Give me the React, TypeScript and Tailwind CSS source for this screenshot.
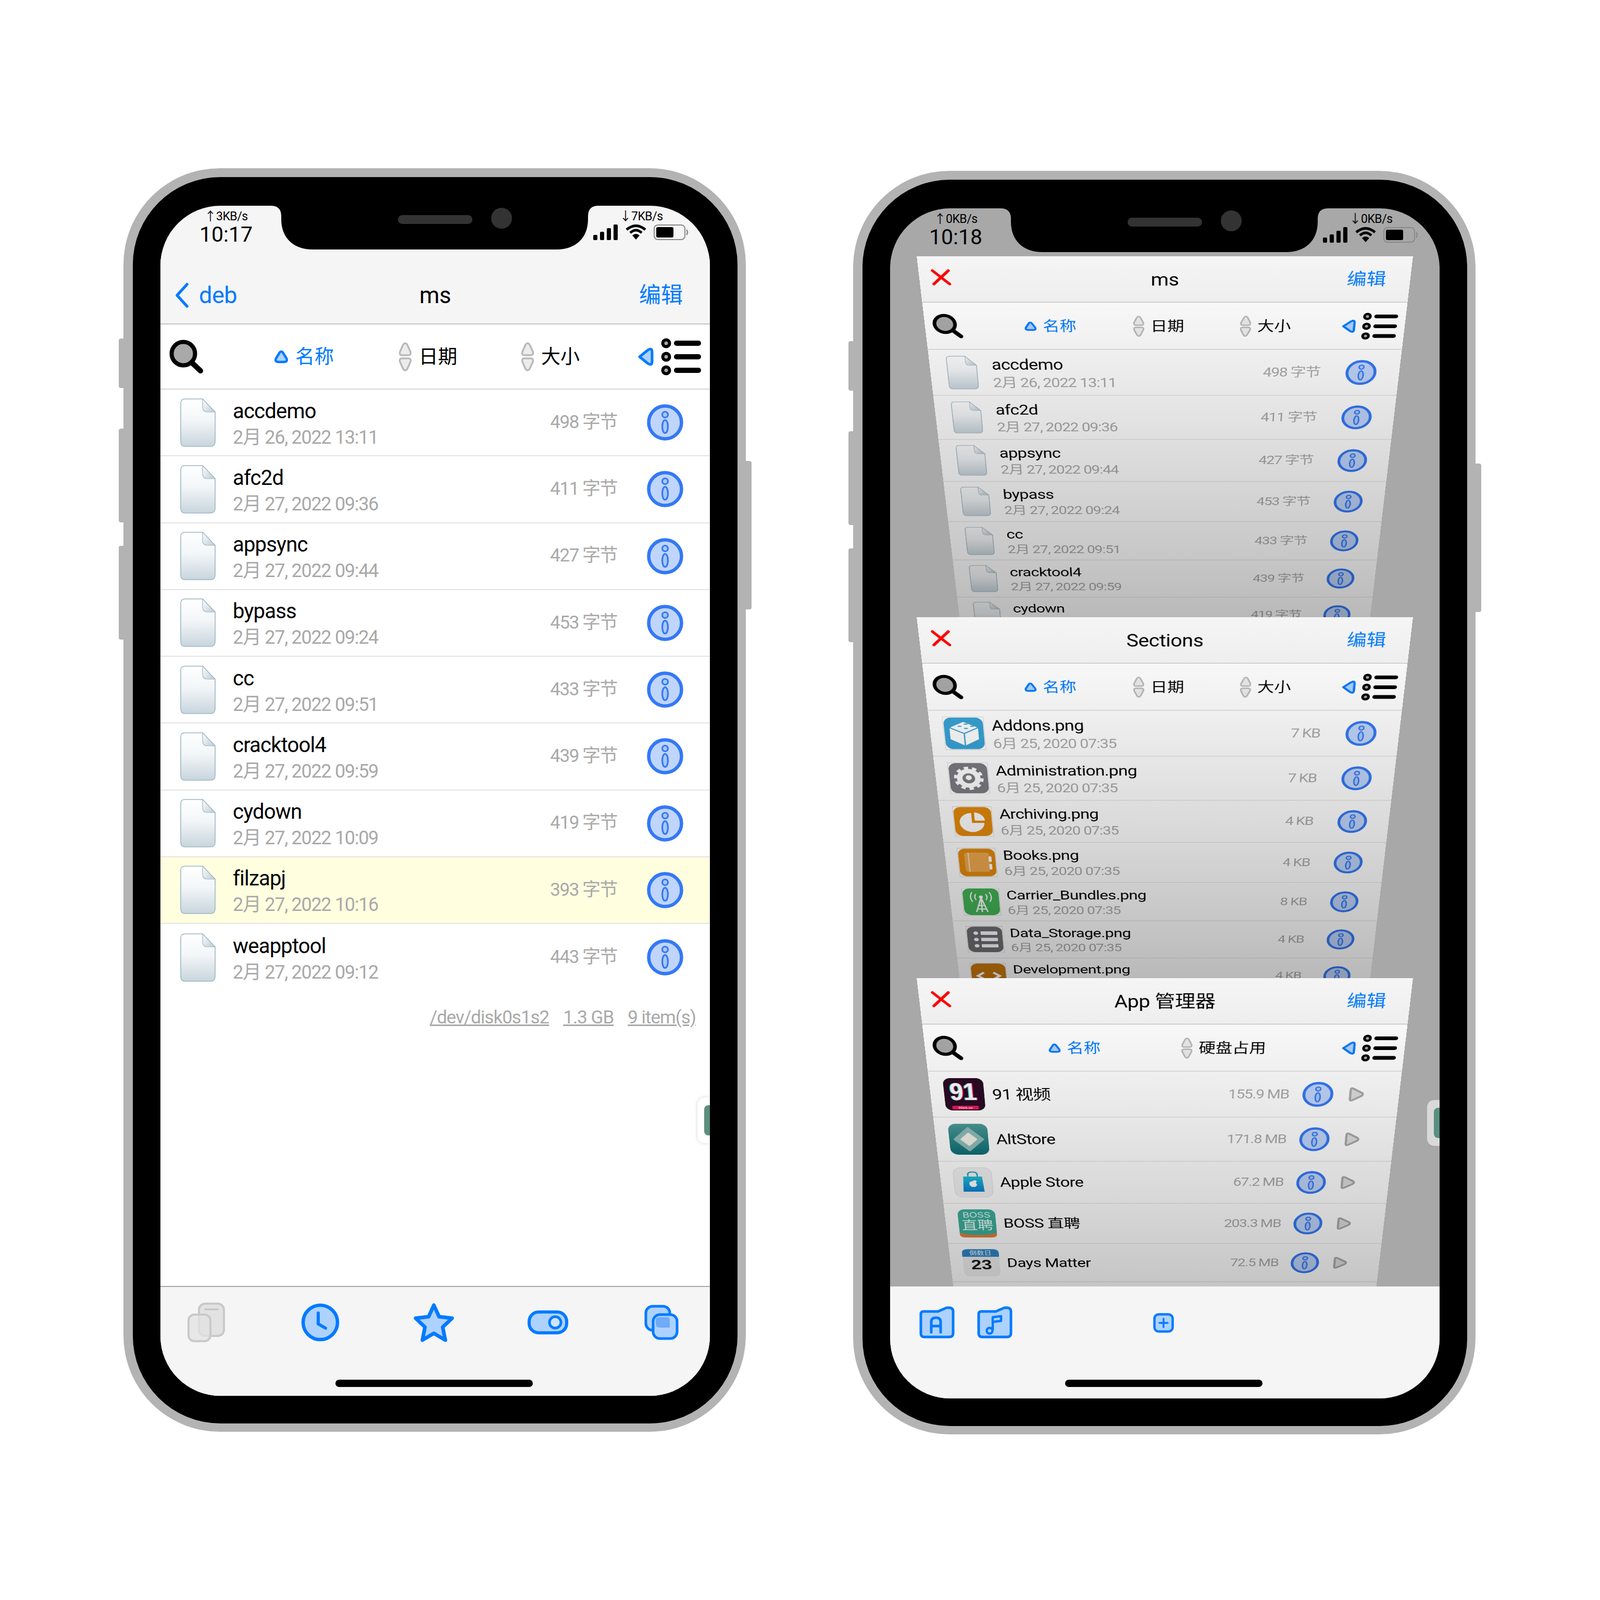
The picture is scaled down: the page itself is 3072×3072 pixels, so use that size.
import type { ReactNode } from "react";

const BLUE = "#007aff";
const SOFT = "#aed2ff";

// ---- small drawings ----

function Search() {
  return (
    <svg width="68" height="66" viewBox="0 0 68 66" className="shrink-0">
      <circle cx="28" cy="27" r="22.5" fill="#a9a9a9" stroke="#000" strokeWidth="8" />
      <path d="M44 44 L61 60" stroke="#000" strokeWidth="10" strokeLinecap="round" />
    </svg>
  );
}

function SortUp() {
  return (
    <svg width="28" height="28" viewBox="0 0 28 28" className="shrink-0">
      <path d="M14 4 Q16 4 17.5 6.5 L24 17 Q27 24 19 24 H9 Q1 24 4 17 L10.5 6.5 Q12 4 14 4 Z" fill={SOFT} stroke={BLUE} strokeWidth="4.5" strokeLinejoin="round" />
    </svg>
  );
}

function SortBoth() {
  return (
    <svg width="26" height="56" viewBox="0 0 26 56" className="shrink-0">
      <path d="M13 2 Q16 2 18 7 L23 18 Q25 25 19 25 H7 Q1 25 3 18 L8 7 Q10 2 13 2 Z" fill="#ececec" stroke="#b9b9b9" strokeWidth="3.5" />
      <path d="M13 54 Q16 54 18 49 L23 38 Q25 31 19 31 H7 Q1 31 3 38 L8 49 Q10 54 13 54 Z" fill="#ececec" stroke="#b9b9b9" strokeWidth="3.5" />
    </svg>
  );
}

function SortDir() {
  return (
    <svg width="30" height="36" viewBox="0 0 30 36" className="shrink-0">
      <path d="M3 18 L19 5 Q27 0 27 9 V27 Q27 36 19 31 Z" fill={SOFT} stroke={BLUE} strokeWidth="5" strokeLinejoin="round" />
    </svg>
  );
}

function ListIcon() {
  return (
    <svg width="78" height="72" viewBox="0 0 78 72" className="shrink-0">
      {[10, 36, 62].map((y) => (
        <g key={y}>
          <circle cx="10" cy={y} r="6.5" fill="#a9a9a9" stroke="#000" strokeWidth="6" />
          <rect x="25" y={y - 5} width="52" height="10" rx="5" fill="#000" />
        </g>
      ))}
    </svg>
  );
}

function FileIcon() {
  return (
    <svg width="68" height="93" viewBox="0 0 68 93" className="ml-[8px] shrink-0">
      <defs>
        <linearGradient id="fileFill" x1="0" y1="0" x2="0" y2="1">
          <stop offset="0" stopColor="#ffffff" />
          <stop offset="0.45" stopColor="#f3f6f8" />
          <stop offset="1" stopColor="#c8d5dd" />
        </linearGradient>
        <linearGradient id="fileFold" x1="0" y1="0" x2="1" y2="1">
          <stop offset="0" stopColor="#ffffff" />
          <stop offset="1" stopColor="#bccbd4" />
        </linearGradient>
      </defs>
      <path d="M9 1 H43 L67 26 V83 Q67 92 58 92 H9 Q1 92 1 83 V9 Q1 1 9 1 Z" fill="url(#fileFill)" stroke="#9fb6c3" strokeWidth="1.6" />
      <path d="M43 1 V17 Q43 26 52 26 H67 Z" fill="url(#fileFold)" stroke="#9fb6c3" strokeWidth="1.2" />
    </svg>
  );
}

function Info() {
  return (
    <svg width="70" height="70" viewBox="0 0 70 70" className="shrink-0">
      <circle cx="35" cy="35" r="31.5" fill="#bfd5fb" stroke="#3478f6" strokeWidth="6.5" />
      <circle cx="35" cy="20" r="5.5" fill="#a9c7f9" stroke="#3478f6" strokeWidth="3.2" />
      <ellipse cx="35" cy="43" rx="5.5" ry="12.5" fill="#a9c7f9" stroke="#3478f6" strokeWidth="3.2" />
    </svg>
  );
}

function Play() {
  return (
    <svg width="36" height="42" viewBox="0 0 36 42" className="shrink-0">
      <path d="M5 8 Q5 2 11 5 L31 17 Q35 21 31 25 L11 37 Q5 40 5 34 Z" fill="#dedede" stroke="#a8a8a8" strokeWidth="5" strokeLinejoin="round" />
    </svg>
  );
}

function CloseX() {
  return (
    <svg width="42" height="42" viewBox="0 0 42 42" className="shrink-0">
      <path d="M4 4 L38 38 M38 4 L4 38" stroke="#ff0000" strokeWidth="6.5" strokeLinecap="round" />
    </svg>
  );
}

function Chevron() {
  return (
    <svg width="30" height="50" viewBox="0 0 30 50" className="shrink-0">
      <path d="M25 4 L6 25 L25 46" fill="none" stroke={BLUE} strokeWidth="5.5" strokeLinecap="round" strokeLinejoin="round" />
    </svg>
  );
}

function Notch() {
  return (
    <svg width="629" height="84" viewBox="0 0 629 84" className="absolute left-[212px] top-0">
      <path d="M0 0 H629 Q609 0 609 20 V26 C609 62 585 84 549 84 H80 C44 84 20 62 20 26 V20 Q20 0 0 0 Z" fill="#000" />
      <rect x="244" y="18" width="143" height="17" rx="8.5" fill="#333" />
      <circle cx="443" cy="24" r="20" fill="#333" />
    </svg>
  );
}

function Signal() {
  return (
    <svg width="48" height="30" viewBox="0 0 48 30" className="shrink-0">
      <rect x="0" y="20" width="8" height="10" rx="2" fill="#000" />
      <rect x="13" y="14" width="8" height="16" rx="2" fill="#000" />
      <rect x="26" y="7" width="8" height="23" rx="2" fill="#000" />
      <rect x="39" y="0" width="8" height="30" rx="2" fill="#000" />
    </svg>
  );
}

function Wifi() {
  return (
    <svg width="40" height="30" viewBox="0 0 40 30" className="shrink-0">
      <path d="M2 10 Q20 -5 38 10" fill="none" stroke="#000" strokeWidth="5" />
      <path d="M9 16 Q20 6 31 16" fill="none" stroke="#000" strokeWidth="5" />
      <path d="M20 29 L13 21 Q20 15 27 21 Z" fill="#000" />
    </svg>
  );
}

function Battery() {
  return (
    <svg width="68" height="30" viewBox="0 0 68 30" className="shrink-0">
      <rect x="1" y="1" width="59" height="28" rx="7" fill="none" stroke="#8a8a8a" strokeWidth="2" />
      <rect x="5" y="5" width="33" height="20" rx="3" fill="#000" />
      <path d="M63 10 Q67 15 63 20" fill="none" stroke="#8a8a8a" strokeWidth="2.5" />
    </svg>
  );
}

// ---- tab bar icons ----

function TabCopies() {
  return (
    <svg width="72" height="76" viewBox="0 0 72 76">
      <rect x="22" y="2" width="48" height="62" rx="12" fill="#e2e2e2" stroke="#c9c9c9" strokeWidth="4" />
      <rect x="32" y="11" width="28" height="4" rx="2" fill="#c9c9c9" />
      <rect x="2" y="23" width="42" height="51" rx="11" fill="#e2e2e2" fillOpacity="0.75" stroke="#c9c9c9" strokeWidth="4" />
    </svg>
  );
}

function TabClock() {
  return (
    <svg width="74" height="74" viewBox="0 0 74 74">
      <circle cx="37" cy="37" r="33" fill={SOFT} stroke={BLUE} strokeWidth="6.5" />
      <path d="M33 19 V40 L47 48" fill="none" stroke={BLUE} strokeWidth="6" strokeLinecap="round" strokeLinejoin="round" />
    </svg>
  );
}

function TabStar() {
  return (
    <svg width="80" height="76" viewBox="0 0 80 76">
      <path d="M40 5 L50 27 L75 30 L57 47 L62 72 L40 59 L18 72 L23 47 L5 30 L30 27 Z" fill={SOFT} stroke={BLUE} strokeWidth="7" strokeLinejoin="round" />
    </svg>
  );
}

function TabToggle() {
  return (
    <svg width="78" height="46" viewBox="0 0 78 46">
      <rect x="3" y="3" width="72" height="40" rx="18" fill={SOFT} stroke={BLUE} strokeWidth="6" />
      <circle cx="53" cy="23" r="11" fill="#cfe3ff" stroke={BLUE} strokeWidth="5" />
    </svg>
  );
}

function TabStack() {
  return (
    <svg width="66" height="68" viewBox="0 0 66 68">
      <rect x="3" y="3" width="46" height="46" rx="13" fill={SOFT} stroke={BLUE} strokeWidth="5" />
      <rect x="17" y="19" width="46" height="46" rx="13" fill={SOFT} stroke={BLUE} strokeWidth="5" />
      <path d="M22 30 Q22 24 28 24 H44 Q49 24 49 30 V44 H30 Q22 44 22 36 Z" fill="#6fabf7" />
    </svg>
  );
}

function FolderA() {
  return (
    <svg width="68" height="62" viewBox="0 0 68 62">
      <path d="M8 10 H36 L52 3 Q65 1 65 10 V52 Q65 59 57 59 H10 Q3 59 3 52 V15 Q3 10 8 10 Z" fill={SOFT} stroke={BLUE} strokeWidth="5" strokeLinejoin="round" />
      <path d="M23 50 V30 Q23 22 32 22 Q41 22 41 30 V50 M23 38 H41" fill="none" stroke={BLUE} strokeWidth="5" strokeLinecap="round" />
    </svg>
  );
}

function FolderMusic() {
  return (
    <svg width="68" height="62" viewBox="0 0 68 62">
      <path d="M8 10 H36 L52 3 Q65 1 65 10 V52 Q65 59 57 59 H10 Q3 59 3 52 V15 Q3 10 8 10 Z" fill={SOFT} stroke={BLUE} strokeWidth="5" strokeLinejoin="round" />
      <circle cx="24" cy="47" r="5.5" fill="none" stroke={BLUE} strokeWidth="4.5" />
      <path d="M30 46 V21 L46 19 V28 L31 30" fill="none" stroke={BLUE} strokeWidth="4.5" strokeLinejoin="round" />
    </svg>
  );
}

function PlusBox() {
  return (
    <svg width="40" height="38" viewBox="0 0 40 38">
      <rect x="2.5" y="2.5" width="35" height="33" rx="8" fill={SOFT} stroke={BLUE} strokeWidth="4.5" />
      <path d="M20 11 V27 M12 19 H28" stroke={BLUE} strokeWidth="3.5" strokeLinecap="round" />
    </svg>
  );
}

// ---- app / section icons, 92 box ----

function Tile({ bg, children }: { bg: string; children?: ReactNode }) {
  return (
    <svg width="92" height="92" viewBox="0 0 92 92" className="shrink-0">
      <rect x="0.5" y="0.5" width="91" height="91" fill="none" stroke="#d4d4d4" />
      <rect x="2" y="2" width="88" height="88" rx="17" fill={bg} />
      {children}
    </svg>
  );
}

const AddonsIcon = (
  <Tile bg="#38a3d6">
    <path d="M46 14 L78 30 V62 L46 80 L14 62 V30 Z" fill="#fff" />
    <path d="M14 30 L46 46 L78 30 M46 46 V80" fill="none" stroke="#38a3d6" strokeWidth="3" />
    <path d="M34 26 h6 M48 20 h6 M48 32 h6 M62 26 h6" stroke="#38a3d6" strokeWidth="3" strokeLinecap="round" />
  </Tile>
);
const AdminIcon = (
  <Tile bg="#7b7b82">
    <circle cx="46" cy="46" r="21" fill="none" stroke="#fff" strokeWidth="13" />
    <circle cx="46" cy="46" r="30" fill="none" stroke="#fff" strokeWidth="8" strokeDasharray="10 8.85" />
    <circle cx="46" cy="44" r="7" fill="#fff" />
  </Tile>
);
const ArchiveIcon = (
  <Tile bg="#e58a0c">
    <path d="M43 20 V50 H72 A29 29 0 1 1 43 20 Z" fill="#fff" />
    <path d="M50 18 A26 26 0 0 1 74 43 H50 Z" fill="#fff" />
  </Tile>
);
const BooksIcon = (
  <Tile bg="#e58a0c">
    <rect x="16" y="14" width="60" height="62" rx="8" fill="#eea94f" />
    <path d="M26 14 V76" stroke="#f9dcae" strokeWidth="3" />
    <rect x="74" y="26" width="7" height="18" rx="3" fill="#fff" />
    <rect x="74" y="50" width="7" height="18" rx="3" fill="#fff" />
  </Tile>
);
const CarrierIcon = (
  <Tile bg="#43b556">
    <circle cx="46" cy="30" r="5" fill="#fff" />
    <path d="M34 20 Q28 30 34 40 M58 20 Q64 30 58 40 M25 14 Q16 30 25 46 M67 14 Q76 30 67 46" fill="none" stroke="#fff" strokeWidth="3" />
    <path d="M46 32 L32 80 M46 32 L60 80 M38 58 H54 M35 70 H57 M46 32 V80" fill="none" stroke="#fff" strokeWidth="3.5" />
  </Tile>
);
const StorageIcon = (
  <Tile bg="#6e6e73">
    {[24, 46, 68].map((y) => (
      <g key={y}>
        <circle cx="24" cy={y} r="6" fill="#fff" />
        <rect x="36" y={y - 6} width="42" height="12" rx="2" fill="#fff" />
      </g>
    ))}
  </Tile>
);
const DevIcon = (
  <Tile bg="#c8780c">
    <path d="M34 34 L18 46 L34 58 M58 34 L74 46 L58 58" fill="none" stroke="#fff" strokeWidth="7" />
  </Tile>
);

const NinetyOneIcon = (
  <svg width="92" height="92" viewBox="0 0 92 92" className="shrink-0">
    <rect x="1" y="1" width="90" height="90" rx="16" fill="#2b0a24" />
    <text transform="translate(12 62) scale(0.8 1)" fontFamily="Liberation Sans" fontWeight="700" fontSize="68" fill="#25e0e8">91</text>
    <text transform="translate(16 62) scale(0.8 1)" fontFamily="Liberation Sans" fontWeight="700" fontSize="68" fill="#f0275c">91</text>
    <text transform="translate(14 62) scale(0.8 1)" fontFamily="Liberation Sans" fontWeight="700" fontSize="68" fill="#ffffff">91</text>
    <rect x="16" y="78" width="60" height="10" rx="3" fill="#e9195c" />
    <text x="46" y="86" textAnchor="middle" fontFamily="Liberation Sans" fontWeight="700" fontSize="8" fill="#fff">91lvh.co</text>
  </svg>
);
const AltStoreIcon = (
  <svg width="92" height="92" viewBox="0 0 92 92" className="shrink-0">
    <defs>
      <linearGradient id="altBg" x1="0" y1="0" x2="0" y2="1">
        <stop offset="0" stopColor="#4d9a99" />
        <stop offset="1" stopColor="#0c6f76" />
      </linearGradient>
    </defs>
    <rect x="1" y="1" width="90" height="90" rx="18" fill="url(#altBg)" />
    <path d="M46 14 L78 46 L46 78 L14 46 Z" fill="#8fbdb9" stroke="#8fbdb9" strokeWidth="6" strokeLinejoin="round" />
    <path d="M46 30 L62 46 L46 62 L30 46 Z" fill="#f3f1e8" stroke="#f3f1e8" strokeWidth="6" strokeLinejoin="round" />
  </svg>
);
const AppleStoreIcon = (
  <svg width="92" height="92" viewBox="0 0 92 92" className="shrink-0">
    <defs>
      <linearGradient id="bagFill" x1="0" y1="0" x2="0" y2="1">
        <stop offset="0" stopColor="#1fc0d8" />
        <stop offset="1" stopColor="#0a7fd6" />
      </linearGradient>
    </defs>
    <rect x="1" y="1" width="90" height="90" rx="18" fill="#f2f2f2" stroke="#d6d6d6" />
    <path d="M35 28 V22 Q35 14 46 14 Q57 14 57 22 V28" fill="none" stroke="#1a9bbd" strokeWidth="3" />
    <path d="M24 28 H68 L71 74 H21 Z" fill="url(#bagFill)" />
    <path d="M46 40 Q52 38 55 42 Q50 46 55 53 Q50 62 46 59 Q42 62 37 53 Q35 42 46 42 Z" fill="#fff" />
  </svg>
);
const BossIcon = (
  <svg width="92" height="92" viewBox="0 0 92 92" className="shrink-0">
    <rect x="1" y="1" width="90" height="90" rx="17" fill="#3dae9c" />
    <path d="M1 76 Q46 90 91 76 V80 Q91 91 76 91 H16 Q1 91 1 80 Z" fill="#e3803b" />
    <text x="46" y="27" textAnchor="middle" fontFamily="Liberation Sans" fontSize="24" fill="#eafff8">BOSS</text>
    <text x="46" y="64" textAnchor="middle" fontFamily="Noto Sans CJK SC" fontSize="38" fill="#eafff8">直聘</text>
  </svg>
);
const DaysIcon = (
  <svg width="92" height="92" viewBox="0 0 92 92" className="shrink-0">
    <rect x="1" y="1" width="90" height="90" rx="14" fill="#f1f1f1" />
    <path d="M1 26 V15 Q1 1 15 1 H77 Q91 1 91 15 V26 Z" fill="#2e86c8" />
    <text x="46" y="20" textAnchor="middle" fontFamily="Noto Sans CJK SC" fontSize="18" fill="#fff">倒数日</text>
    <text x="46" y="68" textAnchor="middle" fontFamily="Liberation Sans" fontWeight="700" fontSize="46" fill="#1a1a1a">23</text>
  </svg>
);

// ---- bars and rows ----

function StatusBar({ up, down, time }: { up: string; down: string; time: string }) {
  return (
    <div className="relative flex justify-between h-[92px] shrink-0 pl-[70px] pr-[41px] text-black">
      <div className="flex w-[112px] flex-col items-center pt-[7px]">
        <span className="text-[23px] leading-[28px] tracking-[-0.5px]">↑{up}</span>
        <span className="-mt-[3px] text-[41px] leading-[46px]">{time}</span>
      </div>
      <div className="flex w-[182px] flex-col items-center pt-[7px]">
        <span className="text-[23px] leading-[28px] tracking-[-0.5px]">↓{down}</span>
        <div className="mt-[1px] flex items-center gap-[14px]">
          <Signal />
          <Wifi />
          <Battery />
        </div>
      </div>
      <Notch />
    </div>
  );
}

function NavBar({ title, close, height }: { title: string; close?: boolean; height: string }) {
  return (
    <div className={`relative flex items-center justify-center border-b-2 border-[#c4c4c4] bg-[#f5f5f5] shrink-0 ${height} ${close ? "pt-[2px]" : "pt-[26px]"}`}>
      <span className="text-[44px] leading-[60px] tracking-[-0.5px] text-black">{title}</span>
      {close ? (
        <div className="absolute left-[26px] top-[32px]">
          <CloseX />
        </div>
      ) : (
        <div className="absolute left-[26px] bottom-[24px] flex items-center gap-[18px]">
          <Chevron />
          <span className="text-[45px] leading-[60px] tracking-[-0.5px] text-[#007aff]">deb</span>
        </div>
      )}
      <span className={`absolute right-[52px] text-[42px] leading-[60px] text-[#007aff] ${close ? "bottom-[28px]" : "bottom-[24px]"}`}>编辑</span>
    </div>
  );
}

function SortLabel({ text, active }: { text: string; active?: boolean }) {
  return (
    <div className="flex items-center whitespace-nowrap">
      {active ? <SortUp /> : <SortBoth />}
      <span className={`ml-[13px] pt-[2px] text-[37px] leading-[50px] ${active ? "text-[#007aff]" : "text-black"}`}>{text}</span>
    </div>
  );
}

function FileToolbar() {
  return (
    <div className="flex h-[125px] shrink-0 items-center border-b-2 border-[#d6d6d6] bg-white pl-[16px] pr-[16px]">
      <Search />
      <div className="ml-[134px] flex items-center">
        <div className="w-[239px]">
          <SortLabel text="名称" active />
        </div>
        <div className="w-[235px]">
          <SortLabel text="日期" />
        </div>
        <SortLabel text="大小" />
      </div>
      <div className="ml-auto flex items-center gap-[14px]">
        <SortDir />
        <ListIcon />
      </div>
    </div>
  );
}

function AppToolbar() {
  return (
    <div className="flex h-[125px] shrink-0 items-center border-b-2 border-[#d6d6d6] bg-white pl-[16px] pr-[16px]">
      <Search />
      <div className="ml-[187px] flex items-center">
        <div className="w-[292px]">
          <SortLabel text="名称" active />
        </div>
        <SortLabel text="硬盘占用" />
      </div>
      <div className="ml-auto flex items-center gap-[14px]">
        <SortDir />
        <ListIcon />
      </div>
    </div>
  );
}

function FileRow({ icon, name, date, size, highlight, last }: { icon?: ReactNode; name: string; date: string; size: string; highlight?: boolean; last?: boolean }) {
  return (
    <div className={`flex h-[128.25px] shrink-0 items-center pr-[51px] ${last ? "" : "border-b-2 border-[#e4e4e4]"} ${highlight ? "bg-[#ffffe0]" : "bg-white"}`}>
      <div className="flex w-[139px] shrink-0 items-center pl-[30px]">{icon ?? <FileIcon />}</div>
      <div className="flex min-w-0 flex-1 flex-col pt-[7px]">
        <span className="text-[40px] leading-[51px] tracking-[-0.8px] text-black">{name}</span>
        <span className="text-[36px] leading-[51px] tracking-[-1.3px] text-[#a9a9a9]">{date}</span>
      </div>
      <span className="mr-[57px] text-[35px] tracking-[-1.5px] text-[#a9a9a9]">{size}</span>
      <Info />
    </div>
  );
}

function AppRow({ icon, name, size }: { icon: ReactNode; name: string; size: string }) {
  return (
    <div className="flex h-[128.25px] shrink-0 items-center border-b-2 border-[#e4e4e4] bg-white pr-[79px]">
      <div className="flex w-[139px] shrink-0 items-center pl-[30px]">{icon}</div>
      <span className="flex-1 text-[40px] leading-[51px] tracking-[-0.8px] text-black">{name}</span>
      <span className="mr-[30px] text-[35px] tracking-[-1.5px] text-[#a9a9a9]">{size}</span>
      <Info />
      <div className="ml-[33px]">
        <Play />
      </div>
    </div>
  );
}

// tilted window in the task switcher
function Card({ top, children }: { top: string; children: ReactNode }) {
  return (
    <div className={`absolute left-0 w-[1055px] h-[1180px] origin-top overflow-hidden bg-white [transform:scale(0.9033)_perspective(2690px)_rotateX(-31.2deg)] ${top}`}>
      {children}
      <div className="absolute inset-0 bg-gradient-to-b from-black/0 to-black/30" />
    </div>
  );
}

function Handle({ dim }: { dim?: boolean }) {
  return (
    <div className={`absolute right-0 top-[1712px] flex h-[88px] w-[24px] items-center rounded-l-[14px] pl-[13px] ${dim ? "bg-[#d9d9d9]" : "bg-white shadow-[0_0_6px_rgba(0,0,0,0.18)]"}`}>
      <div className="h-[58px] w-[11px] rounded-l-[8px] bg-[#5b8f7f]" />
    </div>
  );
}

function HomeBar({ className }: { className: string }) {
  return <div className={`absolute left-[336px] h-[14px] w-[379px] rounded-full bg-black ${className}`} />;
}

function TabSlot({ children }: { children: ReactNode }) {
  return <div className="flex h-[80px] w-[80px] items-center justify-center">{children}</div>;
}

function Phone({ className, screen, children }: { className?: string; screen: string; children: ReactNode }) {
  return (
    <div className={`relative h-[2426px] w-[1195px] shrink-0 rounded-[185px] bg-[#b3b3b3] pt-[17px] pr-[16px] pb-[16px] pl-[18px] ${className ?? ""}`}>
      <div className="absolute -left-[9px] top-[327px] h-[95px] w-[12px] rounded-l-[4px] bg-[#b3b3b3]" />
      <div className="absolute -left-[9px] top-[500px] h-[180px] w-[12px] rounded-l-[4px] bg-[#b3b3b3]" />
      <div className="absolute -left-[9px] top-[725px] h-[180px] w-[12px] rounded-l-[4px] bg-[#b3b3b3]" />
      <div className="absolute -right-[11px] top-[562px] h-[285px] w-[14px] rounded-r-[4px] bg-[#b3b3b3]" />
      <div className="h-full rounded-[168px] bg-black px-[53px] pt-[55px] pb-[53px]">
        <div className={`relative flex h-full flex-col overflow-hidden rounded-[115px] ${screen}`}>{children}</div>
      </div>
    </div>
  );
}

const msFiles = [
  ["accdemo", "2月 26, 2022 13:11", "498 字节"],
  ["afc2d", "2月 27, 2022 09:36", "411 字节"],
  ["appsync", "2月 27, 2022 09:44", "427 字节"],
  ["bypass", "2月 27, 2022 09:24", "453 字节"],
  ["cc", "2月 27, 2022 09:51", "433 字节"],
  ["cracktool4", "2月 27, 2022 09:59", "439 字节"],
  ["cydown", "2月 27, 2022 10:09", "419 字节"],
];

const sections: [ReactNode, string, string][] = [
  [AddonsIcon, "Addons.png", "7 KB"],
  [AdminIcon, "Administration.png", "7 KB"],
  [ArchiveIcon, "Archiving.png", "4 KB"],
  [BooksIcon, "Books.png", "4 KB"],
  [CarrierIcon, "Carrier_Bundles.png", "8 KB"],
  [StorageIcon, "Data_Storage.png", "4 KB"],
  [DevIcon, "Development.png", "4 KB"],
];

const apps: [ReactNode, string, string][] = [
  [NinetyOneIcon, "91 视频", "155.9 MB"],
  [AltStoreIcon, "AltStore", "171.8 MB"],
  [AppleStoreIcon, "Apple Store", "67.2 MB"],
  [BossIcon, "BOSS 直聘", "203.3 MB"],
  [DaysIcon, "Days Matter", "72.5 MB"],
];

export default function App() {
  return (
    <div className="flex h-[3072px] w-[3072px] items-start bg-white pt-[323px] pl-[237px] font-[Roboto,'Noto_Sans_CJK_SC',sans-serif]">
      <Phone screen="bg-[#f5f5f5]">
        <StatusBar up="3KB/s" down="7KB/s" time="10:17" />
        <NavBar title="ms" height="h-[136px]" />
        <FileToolbar />
        <div className="flex flex-1 flex-col bg-white">
          {msFiles.map(([name, date, size]) => (
            <FileRow key={name} name={name} date={date} size={size} />
          ))}
          <FileRow name="filzapj" date="2月 27, 2022 10:16" size="393 字节" highlight />
          <FileRow name="weapptool" date="2月 27, 2022 09:12" size="443 字节" last />
          <div className="flex justify-end gap-[27px] pt-[30px] pr-[27px] text-[35px] leading-[44px] tracking-[-1px] text-[#a9a9a9] underline">
            <span>/dev/disk0s1s2</span>
            <span>1.3 GB</span>
            <span>9 item(s)</span>
          </div>
        </div>
        <div className="flex h-[211px] shrink-0 gap-[138.5px] border-t-2 border-[#a8a8a8] bg-[#f5f5f5] pl-[48px] pt-[28px]">
          <TabSlot><TabCopies /></TabSlot>
          <TabSlot><TabClock /></TabSlot>
          <TabSlot><TabStar /></TabSlot>
          <TabSlot><TabToggle /></TabSlot>
          <TabSlot><TabStack /></TabSlot>
        </div>
        <HomeBar className="bottom-[17px]" />
        <Handle />
      </Phone>

      <Phone className="mt-[5px] ml-[206px]" screen="bg-[#a8a8a8]">
        <StatusBar up="0KB/s" down="0KB/s" time="10:18" />
        <div className="relative flex-1 overflow-hidden">
          <Card top="top-0">
            <NavBar title="ms" close height="h-[118px]" />
            <FileToolbar />
            {msFiles.map(([name, date, size]) => (
              <FileRow key={name} name={name} date={date} size={size} />
            ))}
          </Card>
          <Card top="top-[693px]">
            <NavBar title="Sections" close height="h-[118px]" />
            <FileToolbar />
            {sections.map(([icon, name, size]) => (
              <FileRow key={name} icon={icon} name={name} date="6月 25, 2020 07:35" size={size} />
            ))}
          </Card>
          <Card top="top-[1386px]">
            <NavBar title="App 管理器" close height="h-[118px]" />
            <AppToolbar />
            {apps.map(([icon, name, size]) => (
              <AppRow key={name} icon={icon} name={name} size={size} />
            ))}
          </Card>
        </div>
        <div className="flex h-[215px] shrink-0 items-start bg-[#f5f5f5] pt-[38px] pl-[56px]">
          <FolderA />
          <div className="ml-[43px]">
            <FolderMusic />
          </div>
          <div className="ml-[270px] mt-[13px]">
            <PlusBox />
          </div>
        </div>
        <HomeBar className="bottom-[22px]" />
        <Handle dim />
      </Phone>
    </div>
  );
}
